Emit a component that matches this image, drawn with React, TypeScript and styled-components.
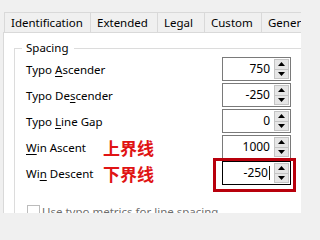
import React from "react";
import styled, { createGlobalStyle } from "styled-components";

const GlobalStyle = createGlobalStyle`
  html, body {
    margin: 0;
    padding: 0;
  }
  body {
    width: 301px;
    height: 213px;
    overflow: hidden;
    background: #f0f0f0;
    font-family: "Noto Sans", "Segoe UI", sans-serif;
    font-size: 11.5px;
    color: #000;
  }
`;

const Window = styled.div`
  box-sizing: border-box;
  height: 213px;
  padding: 12px 0 0 3px;
  display: flex;
  flex-direction: column;
`;

const TabStrip = styled.div`
  display: flex;
  height: 20px;
  margin-left: 1px;
  white-space: nowrap;
`;

const Tab = styled.div<{ $width: number; $first?: boolean }>`
  flex: none;
  box-sizing: border-box;
  width: ${(p) => p.$width}px;
  border: 1px solid #d9d9d9;
  border-bottom: none;
  border-left-width: ${(p) => (p.$first ? 1 : 0)}px;
  background: #f0f0f0;
  line-height: 19px;
  padding-left: 6px;
  overflow: hidden;
`;

const Panel = styled.div`
  flex: 1;
  background: #fff;
  border-top: 1px solid #d9d9d9;
  border-left: 1px solid #d9d9d9;
  padding-top: 7px;
  overflow: hidden;
`;

const Group = styled.fieldset`
  margin: 0 0 0 10px;
  padding: 0 20px 0 11px;
  width: 265px;
  min-width: 0;
  border: 1px solid #dcdcdc;
`;

const Legend = styled.legend`
  padding: 0 5px 0 4px;
  margin-left: -4px;
  line-height: 16px;
`;

const Row = styled.div`
  display: grid;
  grid-template-columns: 77px 1fr 69px;
  align-items: center;
  height: 26px;
`;

const Label = styled.span`
  white-space: nowrap;

  u {
    text-underline-offset: 2px;
  }
`;

const Note = styled.span`
  font-family: "Noto Sans CJK SC", sans-serif;
  font-weight: 700;
  font-size: 17px;
  line-height: 1;
  color: #e01414;
  white-space: nowrap;
`;

const Spin = styled.div<{ $focused?: boolean }>`
  position: relative;
  box-sizing: border-box;
  width: 69px;
  height: 24px;
  border: 1px solid ${(p) => (p.$focused ? "#000" : "#7a7a7a")};
  background: #fff;
  display: flex;
`;

const SpinValue = styled.div`
  flex: 1;
  padding-right: 4px;
  font-size: 12px;
  line-height: 22px;
  display: flex;
  justify-content: flex-end;
  align-items: center;
`;

const Caret = styled.span`
  display: inline-block;
  width: 1px;
  height: 14px;
  margin-left: 1px;
  background: #2a1a00;
`;

const SpinButtons = styled.div`
  width: 15px;
  padding: 1px 1px 1px 0;
  display: flex;
  flex-direction: column;
`;

const SpinButton = styled.div`
  flex: 1;
  background: #e6e6e6;
  border: 1px solid #c4c4c4;
  display: flex;
  align-items: center;
  justify-content: center;

  & + & {
    border-top-width: 0;
  }
`;

const Highlight = styled.div`
  position: absolute;
  top: -4px;
  left: -10px;
  right: -6px;
  bottom: -8px;
  border: 3px solid #b8000c;
  pointer-events: none;
`;

const CheckRow = styled.div`
  display: flex;
  align-items: flex-start;
  margin: 19px 0 0 1px;
  color: #6d6d6d;
  white-space: nowrap;
`;

const CheckBox = styled.span`
  box-sizing: border-box;
  width: 13px;
  height: 13px;
  border: 1px solid #bcbcbc;
  background: #fff;
  margin-right: 2px;
  flex: none;
`;

const CheckText = styled.span`
  line-height: 14px;
`;

const Arrow = ({ up }: { up?: boolean }) => (
  <svg width="7" height="4" viewBox="0 0 7 4">
    <polygon points={up ? "0,4 7,4 3.5,0" : "0,0 7,0 3.5,4"} fill="#000" />
  </svg>
);

type Field = {
  label: React.ReactNode;
  value: string;
  note?: string;
  focused?: boolean;
};

const fields: Field[] = [
  { label: <>Typo <u>A</u>scender</>, value: "750" },
  { label: <>Typo De<u>s</u>cender</>, value: "-250" },
  { label: <>Typo <u>L</u>ine Gap</>, value: "0" },
  { label: <><u>W</u>in Ascent</>, value: "1000", note: "上界线" },
  { label: <>Wi<u>n</u> Descent</>, value: "-250", note: "下界线", focused: true },
];

const tabs = [
  { name: "Identification", width: 87 },
  { name: "Extended", width: 67 },
  { name: "Legal", width: 47 },
  { name: "Custom", width: 57 },
  { name: "General", width: 60 },
];

export default function App() {
  return (
    <>
      <GlobalStyle />
      <Window>
        <TabStrip>
          {tabs.map((t, i) => (
            <Tab key={t.name} $width={t.width} $first={i === 0}>
              {t.name}
            </Tab>
          ))}
        </TabStrip>
        <Panel>
          <Group>
            <Legend>Spacing</Legend>
            {fields.map((f, i) => (
              <Row key={i}>
                <Label>{f.label}</Label>
                <Note>{f.note}</Note>
                <Spin $focused={f.focused}>
                  <SpinValue>
                    {f.value}
                    {f.focused && <Caret />}
                  </SpinValue>
                  <SpinButtons>
                    <SpinButton>
                      <Arrow up />
                    </SpinButton>
                    <SpinButton>
                      <Arrow />
                    </SpinButton>
                  </SpinButtons>
                  {f.focused && <Highlight />}
                </Spin>
              </Row>
            ))}
            <CheckRow>
              <CheckBox />
              <CheckText>Use typo metrics for line spacing</CheckText>
            </CheckRow>
          </Group>
        </Panel>
      </Window>
    </>
  );
}
